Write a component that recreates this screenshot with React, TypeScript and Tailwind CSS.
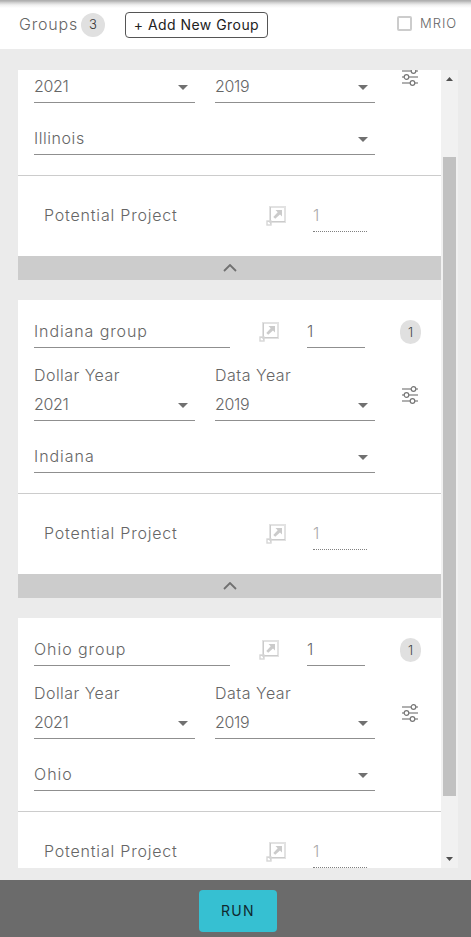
import React from 'react';

interface Group {
  name: string;
  region: string;
  dollarYear: string;
  dataYear: string;
  nameClass?: string;
  regionClass: string;
  // scrolled past its heading, only the value rows are left in view
  scrolled?: boolean;
}

const groups: Group[] = [
  { name: 'Illinois group', region: 'Illinois', dollarYear: '2021', dataYear: '2019', regionClass: 'tracking-[0.55px]', scrolled: true },
  { name: 'Indiana group', region: 'Indiana', dollarYear: '2021', dataYear: '2019', nameClass: 'tracking-[0.9px]', regionClass: 'tracking-[0.95px]' },
  { name: 'Ohio group', region: 'Ohio', dollarYear: '2021', dataYear: '2019', nameClass: 'tracking-[0.95px]', regionClass: 'tracking-[1px]' },
];

const ScaleIcon: React.FC<{ className?: string }> = ({ className = '' }) => (
  <svg width="20" height="20" viewBox="0 0 20 20" fill="none" className={className}>
    <path d="M4 1h15v15H4z" stroke="#e2e2e2" strokeWidth="2" />
    <path d="M4.5 1v17M1 15.5h18" stroke="#cbcbcb" />
    <rect x="1" y="15" width="4" height="4" stroke="#d6d6d6" strokeWidth="1.4" />
    <path d="M9.5 4h6.5v6.5l-2-2-4.8 4.3-1.9-1.9 4.4-4.7z" fill="#cbcbcb" />
  </svg>
);

const SlidersIcon: React.FC = () => (
  <svg width="16" height="20" viewBox="0 0 16 20" fill="none">
    <path d="M0 4h16M0 10h16M0 16h16" stroke="#b0b0b0" strokeWidth="1.8" />
    <g fill="#fff" stroke="#777" strokeWidth="1.2">
      <circle cx="11.5" cy="4" r="2.3" />
      <circle cx="4.5" cy="10" r="2.3" />
      <circle cx="10.5" cy="16" r="2.3" />
    </g>
  </svg>
);

interface SelectProps {
  value: string;
  className: string;
  textClass?: string;
}

const Select: React.FC<SelectProps> = ({ value, className, textClass = 'tracking-[-0.3px]' }) => (
  <div className={`flex h-8 items-center justify-between border-b border-[#8f8f8f] pr-[7px] ${className}`}>
    <span className={`pb-0.5 ${textClass}`}>{value}</span>
    <svg width="10" height="5" viewBox="0 0 10 5" className="mt-px">
      <path d="M0 0h10L5 5z" fill="#707070" />
    </svg>
  </div>
);

const GroupCard: React.FC<{ group: Group }> = ({ group }) => (
  <section className="shrink-0 bg-white">
    {!group.scrolled && (
      <div className="flex h-12 items-end pl-4">
        <div className={`h-8 w-[196px] border-b border-[#8f8f8f] leading-[31px] ${group.nameClass}`}>{group.name}</div>
        <ScaleIcon className="mb-1.5 ml-[29px]" />
        <div className="ml-7 h-8 w-[58px] border-b border-[#8f8f8f] leading-[31px]">1</div>
        <span className="mb-1 ml-[35px] flex h-6 w-[21px] items-center justify-center rounded-[10.5px] bg-[#e0e0e0] pt-0.5 text-[13px] text-[#444]">
          1
        </span>
      </div>
    )}
    <div className={`flex border-b border-[#ccc] pl-4 ${group.scrolled ? 'h-[106px]' : 'h-[146px]'}`}>
      <div className={`w-[341px] ${group.scrolled ? '' : 'pt-[15px]'}`}>
        {!group.scrolled && (
          <div className="flex h-[25px] items-center pb-px">
            <span className="w-[181px] tracking-[0.45px]">Dollar Year</span>
            <span className="tracking-[0.5px]">Data Year</span>
          </div>
        )}
        <div className="mt-px flex justify-between">
          <Select value={group.dollarYear} className="w-[161px]" />
          <Select value={group.dataYear} className="w-[160px]" />
        </div>
        <Select value={group.region} className="mt-5 w-full" textClass={group.regionClass} />
      </div>
      <div className={`ml-[27px] ${group.scrolled ? '-mt-[3px]' : 'pt-[37px]'}`}>
        <SlidersIcon />
      </div>
    </div>
    <div className="flex h-20 items-center pl-[26px]">
      <span className="w-[222px] pb-0.5 tracking-[0.8px]">Potential Project</span>
      <ScaleIcon />
      <div className="ml-[27px] h-8 w-[54px] border-b border-dotted border-[#808080] leading-[31px] text-[#aaa]">1</div>
    </div>
    <div className="flex h-6 items-center justify-center bg-[#ccc]">
      <svg width="14" height="8" viewBox="0 0 14 8" fill="none" className="ml-px">
        <path d="M1 7l6-6 6 6" stroke="#707070" strokeWidth="1.8" />
      </svg>
    </div>
  </section>
);

const Scrollbar: React.FC = () => (
  <div className="flex w-[17px] flex-col items-center bg-[#f1f1f1]">
    <svg width="7" height="4" viewBox="0 0 7 4" className="mt-[7px]">
      <path d="M0 4h7L3.5 0z" fill="#505050" />
    </svg>
    <div className="mt-[76px] h-[639px] w-[13px] bg-[#c1c1c1]" />
    <svg width="7" height="4" viewBox="0 0 7 4" className="mt-[61px]">
      <path d="M0 0h7L3.5 4z" fill="#505050" />
    </svg>
  </div>
);

const App: React.FC = () => {
  return (
    <div className="flex h-[937px] w-[471px] flex-col overflow-hidden bg-[#ebebeb] font-['Inter',sans-serif] text-base font-light text-[#666]">
      <header className="flex h-[49px] shrink-0 items-center bg-[linear-gradient(#b0b0b0_1px,#c8c8c8_2px,#f0f0f0_5px,#fff_8px)] pl-[19px] pr-3.5">
        <span className="w-[62px] -translate-y-px tracking-[0.8px]">Groups</span>
        <span className="flex size-6 items-center justify-center rounded-full bg-[#e0e0e0] text-[13px] text-[#333]">3</span>
        <button className="ml-5 h-[26px] w-[143px] whitespace-nowrap rounded border border-[#555] text-sm font-normal tracking-[0.45px] text-[#222]">
          + Add New Group
        </button>
        <label className="ml-auto flex items-center text-[13px] text-[#666]">
          <span className="-mt-0.5 mr-2 size-[15px] rounded-[2px] border-2 border-[#ccc]" />
          <span className="-mt-0.5 w-[37px] tracking-[1px]">MRIO</span>
        </label>
      </header>

      <main className="mb-3 ml-[18px] mr-[13px] mt-[21px] flex h-[798px] shrink-0 overflow-hidden">
        <div className="flex w-[423px] flex-col gap-5">
          {groups.map((group) => (
            <GroupCard key={group.name} group={group} />
          ))}
        </div>
        <Scrollbar />
      </main>

      <footer className="flex h-[57px] shrink-0 justify-center bg-[#6b6b6b] pl-[5px] pt-2.5">
        <button className="h-[42px] w-[78px] rounded bg-[#36c0d2] text-sm font-normal tracking-[1.3px] text-[#10292e]">RUN</button>
      </footer>
    </div>
  );
};

export default App;
